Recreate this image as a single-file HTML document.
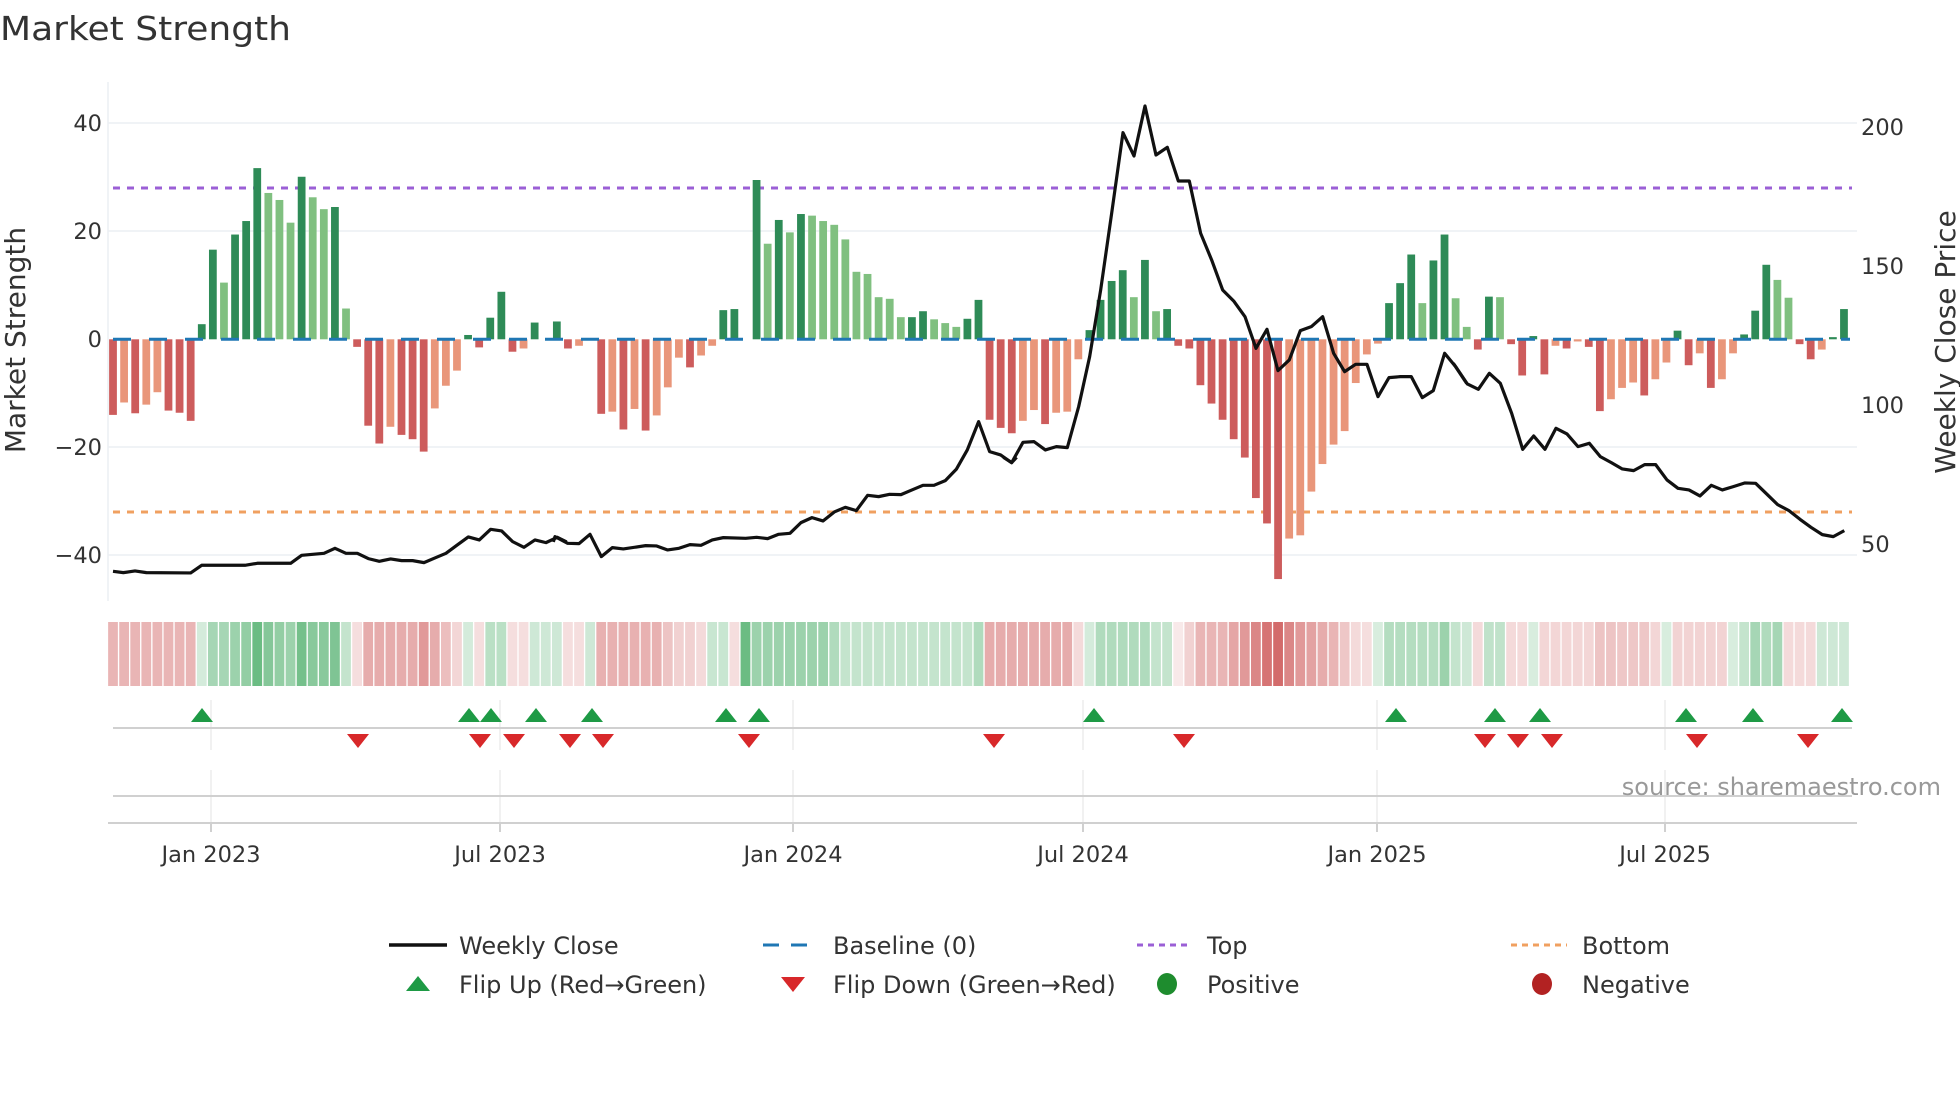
<!DOCTYPE html>
<html><head><meta charset="utf-8"><style>
html,body{margin:0;padding:0;background:#fff;}
svg{display:block;font-family:"DejaVu Sans","Liberation Sans",sans-serif;}
.a{fill:#2e8b57}.b{fill:#80c080}.c{fill:#cd5c5c}.d{fill:#e9967a}
.r{fill:#c84646}.g{fill:#3aa55a}
.t{fill:#333;font-size:22.5px}
.lg{fill:#333;font-size:24px}
</style></head><body>
<svg width="1960" height="1102" viewBox="0 0 1960 1102" xmlns="http://www.w3.org/2000/svg">
<text x="0" y="40" font-size="33" fill="#333" textLength="291" lengthAdjust="spacingAndGlyphs">Market Strength</text>

<g stroke="#eceff3" stroke-width="1.5">
<line x1="108" y1="123" x2="1857" y2="123"/><line x1="108" y1="231" x2="1857" y2="231"/>
<line x1="108" y1="447" x2="1857" y2="447"/><line x1="108" y1="555" x2="1857" y2="555"/>
<line x1="108" y1="82" x2="108" y2="601"/>
</g>
<g class="t" text-anchor="end">
<text x="102" y="131">40</text><text x="102" y="239">20</text><text x="102" y="347">0</text>
<text x="102" y="455">−20</text><text x="102" y="563">−40</text>
</g>
<g class="t">
<text x="1861" y="135">200</text><text x="1861" y="274">150</text><text x="1861" y="413">100</text><text x="1861" y="552">50</text>
</g>
<text transform="translate(25 340) rotate(-90)" text-anchor="middle" font-size="28" fill="#333">Market Strength</text>
<text transform="translate(1955 342) rotate(-90)" text-anchor="middle" font-size="28" fill="#333">Weekly Close Price</text>

<line x1="113" y1="188" x2="1852" y2="188" stroke="#9b5fd6" stroke-width="3" stroke-dasharray="7 7"/>
<line x1="113" y1="512" x2="1852" y2="512" stroke="#f0a060" stroke-width="3" stroke-dasharray="7 7"/>

<g transform="translate(113 339.3) scale(11.096 -5.4)">
<rect class="c" x="-.35" y="-14" width=".7" height="14"/>
<rect class="d" x=".65" y="-11.7" width=".7" height="11.7"/>
<rect class="c" x="1.65" y="-13.7" width=".7" height="13.7"/>
<rect class="d" x="2.65" y="-12.1" width=".7" height="12.1"/>
<rect class="d" x="3.65" y="-9.8" width=".7" height="9.8"/>
<rect class="c" x="4.65" y="-13.2" width=".7" height="13.2"/>
<rect class="c" x="5.65" y="-13.6" width=".7" height="13.6"/>
<rect class="c" x="6.65" y="-15.1" width=".7" height="15.1"/>
<rect class="a" x="7.65" y="0" width=".7" height="2.8"/>
<rect class="a" x="8.65" y="0" width=".7" height="16.6"/>
<rect class="b" x="9.65" y="0" width=".7" height="10.5"/>
<rect class="a" x="10.65" y="0" width=".7" height="19.4"/>
<rect class="a" x="11.65" y="0" width=".7" height="21.9"/>
<rect class="a" x="12.65" y="0" width=".7" height="31.7"/>
<rect class="b" x="13.65" y="0" width=".7" height="27.1"/>
<rect class="b" x="14.65" y="0" width=".7" height="25.8"/>
<rect class="b" x="15.65" y="0" width=".7" height="21.6"/>
<rect class="a" x="16.65" y="0" width=".7" height="30.1"/>
<rect class="b" x="17.65" y="0" width=".7" height="26.3"/>
<rect class="b" x="18.65" y="0" width=".7" height="24.1"/>
<rect class="a" x="19.65" y="0" width=".7" height="24.5"/>
<rect class="b" x="20.65" y="0" width=".7" height="5.7"/>
<rect class="c" x="21.65" y="-1.4" width=".7" height="1.4"/>
<rect class="c" x="22.65" y="-16" width=".7" height="16"/>
<rect class="c" x="23.65" y="-19.3" width=".7" height="19.3"/>
<rect class="d" x="24.65" y="-16.2" width=".7" height="16.2"/>
<rect class="c" x="25.65" y="-17.7" width=".7" height="17.7"/>
<rect class="c" x="26.65" y="-18.5" width=".7" height="18.5"/>
<rect class="c" x="27.65" y="-20.8" width=".7" height="20.8"/>
<rect class="d" x="28.65" y="-12.8" width=".7" height="12.8"/>
<rect class="d" x="29.65" y="-8.6" width=".7" height="8.6"/>
<rect class="d" x="30.65" y="-5.8" width=".7" height="5.8"/>
<rect class="a" x="31.65" y="0" width=".7" height=".8"/>
<rect class="c" x="32.65" y="-1.5" width=".7" height="1.5"/>
<rect class="a" x="33.65" y="0" width=".7" height="4"/>
<rect class="a" x="34.65" y="0" width=".7" height="8.8"/>
<rect class="c" x="35.65" y="-2.3" width=".7" height="2.3"/>
<rect class="d" x="36.65" y="-1.7" width=".7" height="1.7"/>
<rect class="a" x="37.65" y="0" width=".7" height="3.1"/>
<rect class="a" x="39.65" y="0" width=".7" height="3.3"/>
<rect class="c" x="40.65" y="-1.7" width=".7" height="1.7"/>
<rect class="d" x="41.65" y="-1.2" width=".7" height="1.2"/>
<rect class="c" x="43.65" y="-13.8" width=".7" height="13.8"/>
<rect class="d" x="44.65" y="-13.4" width=".7" height="13.4"/>
<rect class="c" x="45.65" y="-16.7" width=".7" height="16.7"/>
<rect class="d" x="46.65" y="-12.9" width=".7" height="12.9"/>
<rect class="c" x="47.65" y="-16.9" width=".7" height="16.9"/>
<rect class="d" x="48.65" y="-14.1" width=".7" height="14.1"/>
<rect class="d" x="49.65" y="-8.9" width=".7" height="8.9"/>
<rect class="d" x="50.65" y="-3.4" width=".7" height="3.4"/>
<rect class="c" x="51.65" y="-5.2" width=".7" height="5.2"/>
<rect class="d" x="52.65" y="-3" width=".7" height="3"/>
<rect class="d" x="53.65" y="-1.2" width=".7" height="1.2"/>
<rect class="a" x="54.65" y="0" width=".7" height="5.4"/>
<rect class="a" x="55.65" y="0" width=".7" height="5.6"/>
<rect class="a" x="57.65" y="0" width=".7" height="29.5"/>
<rect class="b" x="58.65" y="0" width=".7" height="17.7"/>
<rect class="a" x="59.65" y="0" width=".7" height="22.1"/>
<rect class="b" x="60.65" y="0" width=".7" height="19.8"/>
<rect class="a" x="61.65" y="0" width=".7" height="23.2"/>
<rect class="b" x="62.65" y="0" width=".7" height="22.9"/>
<rect class="b" x="63.65" y="0" width=".7" height="21.9"/>
<rect class="b" x="64.65" y="0" width=".7" height="21.2"/>
<rect class="b" x="65.65" y="0" width=".7" height="18.5"/>
<rect class="b" x="66.65" y="0" width=".7" height="12.5"/>
<rect class="b" x="67.65" y="0" width=".7" height="12.1"/>
<rect class="b" x="68.65" y="0" width=".7" height="7.8"/>
<rect class="b" x="69.65" y="0" width=".7" height="7.5"/>
<rect class="b" x="70.65" y="0" width=".7" height="4.1"/>
<rect class="a" x="71.65" y="0" width=".7" height="4.1"/>
<rect class="a" x="72.65" y="0" width=".7" height="5.2"/>
<rect class="b" x="73.65" y="0" width=".7" height="3.7"/>
<rect class="b" x="74.65" y="0" width=".7" height="3"/>
<rect class="b" x="75.65" y="0" width=".7" height="2.3"/>
<rect class="a" x="76.65" y="0" width=".7" height="3.8"/>
<rect class="a" x="77.65" y="0" width=".7" height="7.3"/>
<rect class="c" x="78.65" y="-14.9" width=".7" height="14.9"/>
<rect class="c" x="79.65" y="-16.4" width=".7" height="16.4"/>
<rect class="c" x="80.65" y="-17.4" width=".7" height="17.4"/>
<rect class="d" x="81.65" y="-15.1" width=".7" height="15.1"/>
<rect class="d" x="82.65" y="-13.1" width=".7" height="13.1"/>
<rect class="c" x="83.65" y="-15.7" width=".7" height="15.7"/>
<rect class="d" x="84.65" y="-13.6" width=".7" height="13.6"/>
<rect class="d" x="85.65" y="-13.4" width=".7" height="13.4"/>
<rect class="d" x="86.65" y="-3.7" width=".7" height="3.7"/>
<rect class="a" x="87.65" y="0" width=".7" height="1.7"/>
<rect class="a" x="88.65" y="0" width=".7" height="7.3"/>
<rect class="a" x="89.65" y="0" width=".7" height="10.8"/>
<rect class="a" x="90.65" y="0" width=".7" height="12.8"/>
<rect class="b" x="91.65" y="0" width=".7" height="7.8"/>
<rect class="a" x="92.65" y="0" width=".7" height="14.7"/>
<rect class="b" x="93.65" y="0" width=".7" height="5.2"/>
<rect class="a" x="94.65" y="0" width=".7" height="5.6"/>
<rect class="c" x="95.65" y="-1.2" width=".7" height="1.2"/>
<rect class="c" x="96.65" y="-1.7" width=".7" height="1.7"/>
<rect class="c" x="97.65" y="-8.5" width=".7" height="8.5"/>
<rect class="c" x="98.65" y="-11.9" width=".7" height="11.9"/>
<rect class="c" x="99.65" y="-14.9" width=".7" height="14.9"/>
<rect class="c" x="100.65" y="-18.5" width=".7" height="18.5"/>
<rect class="c" x="101.65" y="-21.9" width=".7" height="21.9"/>
<rect class="c" x="102.65" y="-29.4" width=".7" height="29.4"/>
<rect class="c" x="103.65" y="-34.1" width=".7" height="34.1"/>
<rect class="c" x="104.65" y="-44.4" width=".7" height="44.4"/>
<rect class="d" x="105.65" y="-36.9" width=".7" height="36.9"/>
<rect class="d" x="106.65" y="-36.3" width=".7" height="36.3"/>
<rect class="d" x="107.65" y="-28.2" width=".7" height="28.2"/>
<rect class="d" x="108.65" y="-23.1" width=".7" height="23.1"/>
<rect class="d" x="109.65" y="-19.5" width=".7" height="19.5"/>
<rect class="d" x="110.65" y="-17" width=".7" height="17"/>
<rect class="d" x="111.65" y="-8.1" width=".7" height="8.1"/>
<rect class="d" x="112.65" y="-2.8" width=".7" height="2.8"/>
<rect class="d" x="113.65" y="-.8" width=".7" height=".8"/>
<rect class="a" x="114.65" y="0" width=".7" height="6.7"/>
<rect class="a" x="115.65" y="0" width=".7" height="10.4"/>
<rect class="a" x="116.65" y="0" width=".7" height="15.7"/>
<rect class="b" x="117.65" y="0" width=".7" height="6.7"/>
<rect class="a" x="118.65" y="0" width=".7" height="14.6"/>
<rect class="a" x="119.65" y="0" width=".7" height="19.4"/>
<rect class="b" x="120.65" y="0" width=".7" height="7.6"/>
<rect class="b" x="121.65" y="0" width=".7" height="2.3"/>
<rect class="c" x="122.65" y="-1.9" width=".7" height="1.9"/>
<rect class="a" x="123.65" y="0" width=".7" height="7.9"/>
<rect class="b" x="124.65" y="0" width=".7" height="7.8"/>
<rect class="c" x="125.65" y="-.9" width=".7" height=".9"/>
<rect class="c" x="126.65" y="-6.7" width=".7" height="6.7"/>
<rect class="a" x="127.65" y="0" width=".7" height=".6"/>
<rect class="c" x="128.65" y="-6.5" width=".7" height="6.5"/>
<rect class="d" x="129.65" y="-1.2" width=".7" height="1.2"/>
<rect class="c" x="130.65" y="-1.7" width=".7" height="1.7"/>
<rect class="d" x="131.65" y="-.4" width=".7" height=".4"/>
<rect class="c" x="132.65" y="-1.4" width=".7" height="1.4"/>
<rect class="c" x="133.65" y="-13.3" width=".7" height="13.3"/>
<rect class="d" x="134.65" y="-11.1" width=".7" height="11.1"/>
<rect class="d" x="135.65" y="-9" width=".7" height="9"/>
<rect class="d" x="136.65" y="-8" width=".7" height="8"/>
<rect class="c" x="137.65" y="-10.4" width=".7" height="10.4"/>
<rect class="d" x="138.65" y="-7.4" width=".7" height="7.4"/>
<rect class="d" x="139.65" y="-4.3" width=".7" height="4.3"/>
<rect class="a" x="140.65" y="0" width=".7" height="1.6"/>
<rect class="c" x="141.65" y="-4.8" width=".7" height="4.8"/>
<rect class="d" x="142.65" y="-2.6" width=".7" height="2.6"/>
<rect class="c" x="143.65" y="-9" width=".7" height="9"/>
<rect class="d" x="144.65" y="-7.4" width=".7" height="7.4"/>
<rect class="d" x="145.65" y="-2.6" width=".7" height="2.6"/>
<rect class="a" x="146.65" y="0" width=".7" height=".9"/>
<rect class="a" x="147.65" y="0" width=".7" height="5.3"/>
<rect class="a" x="148.65" y="0" width=".7" height="13.8"/>
<rect class="b" x="149.65" y="0" width=".7" height="11"/>
<rect class="b" x="150.65" y="0" width=".7" height="7.7"/>
<rect class="c" x="151.65" y="-.9" width=".7" height=".9"/>
<rect class="c" x="152.65" y="-3.7" width=".7" height="3.7"/>
<rect class="d" x="153.65" y="-1.9" width=".7" height="1.9"/>
<rect class="a" x="154.65" y="0" width=".7" height=".4"/>
<rect class="a" x="155.65" y="0" width=".7" height="5.6"/>
</g>
<line x1="113" y1="339.3" x2="1850" y2="339.3" stroke="#1f77b4" stroke-width="3" stroke-dasharray="18 18"/>

<g fill="none" stroke="#111" stroke-width="3.2" stroke-linejoin="round">
<polyline vector-effect="non-scaling-stroke" transform="translate(105 100) scale(.3333)" points="24,1414 55,1418 90,1413 124,1418 257,1419 290,1396 420,1396 457,1390 557,1390 590,1366 657,1360 690,1345 723,1360 757,1360 790,1376 823,1384 857,1377 890,1382 923,1382 957,1388 990,1374 1023,1360 1057,1335 1090,1311 1123,1320 1157,1288 1190,1293 1223,1325 1257,1342 1290,1320 1323,1328 1357,1312 1385,1326"/>
<polyline vector-effect="non-scaling-stroke" transform="translate(555 100) scale(.3333)" points="-5,1326 0,1310 38,1330 72,1331 105,1303 139,1370 172,1343 205,1347 272,1337 305,1338 338,1350 372,1345 405,1334 438,1336 472,1320 505,1313 572,1315 605,1312 638,1316 671,1303 705,1300 738,1268 771,1253 804,1263 838,1236 871,1222 904,1232 938,1186 971,1190 1004,1183 1038,1184 1071,1170 1104,1156 1137,1156 1171,1142 1204,1108 1237,1050 1271,965 1304,1055 1337,1065 1370,1088 1385,1072"/>
<polyline vector-effect="non-scaling-stroke" transform="translate(1005 100) scale(.3333)" points="-5,1072 20,1088 54,1027 87,1025 121,1050 154,1040 187,1043 221,920 254,770 287,570 320,340 354,98 387,168 420,18 453,165 487,142 520,243 553,243 587,400 620,480 653,570 686,603 720,650 753,745 786,688 819,812 853,780 886,692 919,680 953,650 986,760 1019,815 1052,793 1086,793 1119,890 1152,833 1186,830 1219,830 1252,893 1285,872 1319,760 1352,800 1385,850"/>
<polyline vector-effect="non-scaling-stroke" transform="translate(1455 100) scale(.3333)" points="-5,790 37,852 70,868 103,820 136,850 170,940 203,1048 236,1008 270,1048 303,985 336,1002 369,1040 403,1030 436,1070 469,1088 502,1107 536,1112 569,1094 602,1094 636,1140 669,1165 702,1170 735,1188 769,1156 802,1170 835,1160 869,1149 902,1150 935,1182 968,1214 1002,1232 1035,1258 1068,1282 1102,1304 1135,1310 1168,1292"/>
</g>

<g transform="translate(113 622) scale(11.096 1)">
<g class="r" fill-opacity=".4"><rect x="-.44" width=".88" height="64"/><rect x=".56" width=".88" height="64"/><rect x="1.56" width=".88" height="64"/><rect x="2.56" width=".88" height="64"/><rect x="3.56" width=".88" height="64"/><rect x="4.56" width=".88" height="64"/><rect x="5.56" width=".88" height="64"/><rect x="6.56" width=".88" height="64"/></g>
<rect class="g" fill-opacity=".22" x="7.56" width=".88" height="64"/>
<rect class="g" fill-opacity=".45" x="8.56" width=".88" height="64"/>
<rect class="g" fill-opacity=".45" x="9.56" width=".88" height="64"/>
<rect class="g" fill-opacity=".5" x="10.56" width=".88" height="64"/>
<rect class="g" fill-opacity=".55" x="11.56" width=".88" height="64"/>
<rect class="g" fill-opacity=".75" x="12.56" width=".88" height="64"/>
<rect class="g" fill-opacity=".62" x="13.56" width=".88" height="64"/>
<rect class="g" fill-opacity=".55" x="14.56" width=".88" height="64"/>
<rect class="g" fill-opacity=".5" x="15.56" width=".88" height="64"/>
<rect class="g" fill-opacity=".7" x="16.56" width=".88" height="64"/>
<rect class="g" fill-opacity=".6" x="17.56" width=".88" height="64"/>
<rect class="g" fill-opacity=".6" x="18.56" width=".88" height="64"/>
<rect class="g" fill-opacity=".65" x="19.56" width=".88" height="64"/>
<rect class="g" fill-opacity=".3" x="20.56" width=".88" height="64"/>
<rect class="r" fill-opacity=".18" x="21.56" width=".88" height="64"/>
<g class="r" fill-opacity=".45"><rect x="22.56" width=".88" height="64"/><rect x="23.56" width=".88" height="64"/><rect x="24.56" width=".88" height="64"/><rect x="25.56" width=".88" height="64"/><rect x="26.56" width=".88" height="64"/><rect x="27.56" width=".88" height="64" fill-opacity=".55"/><rect x="28.56" width=".88" height="64"/><rect x="29.56" width=".88" height="64" fill-opacity=".35"/></g>
<rect class="r" fill-opacity=".22" x="30.56" width=".88" height="64"/>
<rect class="g" fill-opacity=".22" x="31.56" width=".88" height="64"/>
<rect class="r" fill-opacity=".18" x="32.56" width=".88" height="64"/>
<rect class="g" fill-opacity=".35" x="33.56" width=".88" height="64"/>
<rect class="g" fill-opacity=".35" x="34.56" width=".88" height="64"/>
<rect class="r" fill-opacity=".18" x="35.56" width=".88" height="64"/>
<rect class="r" fill-opacity=".18" x="36.56" width=".88" height="64"/>
<rect class="g" fill-opacity=".25" x="37.56" width=".88" height="64"/>
<rect class="g" fill-opacity=".25" x="38.56" width=".88" height="64"/>
<rect class="g" fill-opacity=".25" x="39.56" width=".88" height="64"/>
<rect class="r" fill-opacity=".18" x="40.56" width=".88" height="64"/>
<rect class="r" fill-opacity=".18" x="41.56" width=".88" height="64"/>
<rect class="g" fill-opacity=".25" x="42.56" width=".88" height="64"/>
<g class="r" fill-opacity=".42"><rect x="43.56" width=".88" height="64"/><rect x="44.56" width=".88" height="64"/><rect x="45.56" width=".88" height="64"/><rect x="46.56" width=".88" height="64"/><rect x="47.56" width=".88" height="64"/><rect x="48.56" width=".88" height="64"/><rect x="49.56" width=".88" height="64" fill-opacity=".32"/><rect x="50.56" width=".88" height="64" fill-opacity=".25"/><rect x="51.56" width=".88" height="64" fill-opacity=".25"/><rect x="52.56" width=".88" height="64" fill-opacity=".2"/></g>
<rect class="g" fill-opacity=".28" x="53.56" width=".88" height="64"/>
<rect class="g" fill-opacity=".28" x="54.56" width=".88" height="64"/>
<rect class="r" fill-opacity=".18" x="55.56" width=".88" height="64"/>
<rect class="g" fill-opacity=".75" x="56.56" width=".88" height="64"/>
<g class="g" fill-opacity=".5"><rect x="57.56" width=".88" height="64"/><rect x="58.56" width=".88" height="64"/><rect x="59.56" width=".88" height="64"/><rect x="60.56" width=".88" height="64"/><rect x="61.56" width=".88" height="64"/><rect x="62.56" width=".88" height="64"/><rect x="63.56" width=".88" height="64"/><rect x="64.56" width=".88" height="64" fill-opacity=".4"/></g>
<g class="g" fill-opacity=".3"><rect x="65.56" width=".88" height="64"/><rect x="66.56" width=".88" height="64"/><rect x="67.56" width=".88" height="64"/><rect x="68.56" width=".88" height="64"/><rect x="69.56" width=".88" height="64"/><rect x="70.56" width=".88" height="64"/><rect x="71.56" width=".88" height="64"/><rect x="72.56" width=".88" height="64"/><rect x="73.56" width=".88" height="64"/><rect x="74.56" width=".88" height="64"/><rect x="75.56" width=".88" height="64"/><rect x="76.56" width=".88" height="64"/><rect x="77.56" width=".88" height="64" fill-opacity=".4"/></g>
<g class="r" fill-opacity=".45"><rect x="78.56" width=".88" height="64"/><rect x="79.56" width=".88" height="64"/><rect x="80.56" width=".88" height="64"/><rect x="81.56" width=".88" height="64"/><rect x="82.56" width=".88" height="64"/><rect x="83.56" width=".88" height="64"/><rect x="84.56" width=".88" height="64"/><rect x="85.56" width=".88" height="64"/></g>
<rect class="r" fill-opacity=".2" x="86.56" width=".88" height="64"/>
<rect class="g" fill-opacity=".22" x="87.56" width=".88" height="64"/>
<g class="g" fill-opacity=".4"><rect x="88.56" width=".88" height="64"/><rect x="89.56" width=".88" height="64"/><rect x="90.56" width=".88" height="64"/><rect x="91.56" width=".88" height="64"/><rect x="92.56" width=".88" height="64"/><rect x="93.56" width=".88" height="64" fill-opacity=".3"/><rect x="94.56" width=".88" height="64" fill-opacity=".3"/></g>
<rect class="r" fill-opacity=".12" x="95.56" width=".88" height="64"/>
<rect class="r" fill-opacity=".25" x="96.56" width=".88" height="64"/>
<g class="r" fill-opacity=".4"><rect x="97.56" width=".88" height="64"/><rect x="98.56" width=".88" height="64"/><rect x="99.56" width=".88" height="64"/><rect x="100.56" width=".88" height="64" fill-opacity=".48"/><rect x="101.56" width=".88" height="64" fill-opacity=".55"/><rect x="102.56" width=".88" height="64" fill-opacity=".65"/><rect x="103.56" width=".88" height="64" fill-opacity=".75"/><rect x="104.56" width=".88" height="64" fill-opacity=".8"/><rect x="105.56" width=".88" height="64" fill-opacity=".65"/><rect x="106.56" width=".88" height="64" fill-opacity=".55"/><rect x="107.56" width=".88" height="64" fill-opacity=".5"/><rect x="108.56" width=".88" height="64" fill-opacity=".45"/><rect x="109.56" width=".88" height="64"/><rect x="110.56" width=".88" height="64" fill-opacity=".3"/><rect x="111.56" width=".88" height="64" fill-opacity=".2"/><rect x="112.56" width=".88" height="64" fill-opacity=".18"/></g>
<rect class="g" fill-opacity=".2" x="113.56" width=".88" height="64"/>
<g class="g" fill-opacity=".38"><rect x="114.56" width=".88" height="64"/><rect x="115.56" width=".88" height="64"/><rect x="116.56" width=".88" height="64"/><rect x="117.56" width=".88" height="64"/><rect x="118.56" width=".88" height="64"/><rect x="119.56" width=".88" height="64" fill-opacity=".5"/><rect x="120.56" width=".88" height="64" fill-opacity=".3"/><rect x="121.56" width=".88" height="64" fill-opacity=".25"/></g>
<rect class="r" fill-opacity=".2" x="122.56" width=".88" height="64"/>
<rect class="g" fill-opacity=".32" x="123.56" width=".88" height="64"/>
<rect class="g" fill-opacity=".32" x="124.56" width=".88" height="64"/>
<rect class="r" fill-opacity=".2" x="125.56" width=".88" height="64"/>
<rect class="r" fill-opacity=".2" x="126.56" width=".88" height="64"/>
<rect class="g" fill-opacity=".2" x="127.56" width=".88" height="64"/>
<g class="r" fill-opacity=".22"><rect x="128.56" width=".88" height="64"/><rect x="129.56" width=".88" height="64"/><rect x="130.56" width=".88" height="64"/><rect x="131.56" width=".88" height="64"/><rect x="132.56" width=".88" height="64"/><rect x="133.56" width=".88" height="64" fill-opacity=".32"/><rect x="134.56" width=".88" height="64" fill-opacity=".32"/><rect x="135.56" width=".88" height="64" fill-opacity=".3"/><rect x="136.56" width=".88" height="64" fill-opacity=".3"/><rect x="137.56" width=".88" height="64" fill-opacity=".3"/><rect x="138.56" width=".88" height="64"/></g>
<rect class="g" fill-opacity=".2" x="139.56" width=".88" height="64"/>
<g class="r" fill-opacity=".24"><rect x="140.56" width=".88" height="64"/><rect x="141.56" width=".88" height="64"/><rect x="142.56" width=".88" height="64"/><rect x="143.56" width=".88" height="64"/><rect x="144.56" width=".88" height="64"/></g>
<rect class="g" fill-opacity=".2" x="145.56" width=".88" height="64"/>
<rect class="g" fill-opacity=".3" x="146.56" width=".88" height="64"/>
<rect class="g" fill-opacity=".45" x="147.56" width=".88" height="64"/>
<rect class="g" fill-opacity=".4" x="148.56" width=".88" height="64"/>
<rect class="g" fill-opacity=".45" x="149.56" width=".88" height="64"/>
<rect class="r" fill-opacity=".2" x="150.56" width=".88" height="64"/>
<rect class="r" fill-opacity=".2" x="151.56" width=".88" height="64"/>
<rect class="r" fill-opacity=".2" x="152.56" width=".88" height="64"/>
<rect class="g" fill-opacity=".25" x="153.56" width=".88" height="64"/>
<rect class="g" fill-opacity=".25" x="154.56" width=".88" height="64"/>
<rect class="g" fill-opacity=".25" x="155.56" width=".88" height="64"/>
</g>

<g stroke="#ececec" stroke-width="1.5">
<line x1="211" y1="700" x2="211" y2="750"/><line x1="500" y1="700" x2="500" y2="750"/><line x1="793" y1="700" x2="793" y2="750"/><line x1="1083" y1="700" x2="1083" y2="750"/><line x1="1377" y1="700" x2="1377" y2="750"/><line x1="1665" y1="700" x2="1665" y2="750"/>
<line x1="211" y1="770" x2="211" y2="823"/><line x1="500" y1="770" x2="500" y2="823"/><line x1="793" y1="770" x2="793" y2="823"/><line x1="1083" y1="770" x2="1083" y2="823"/><line x1="1377" y1="770" x2="1377" y2="823"/><line x1="1665" y1="770" x2="1665" y2="823"/>
</g>
<g stroke="#d0d0d0" stroke-width="2">
<line x1="113" y1="728" x2="1852" y2="728"/>
<line x1="113" y1="796" x2="1852" y2="796"/>
<line x1="108" y1="823" x2="1857" y2="823"/>
<line x1="211" y1="823" x2="211" y2="832"/><line x1="500" y1="823" x2="500" y2="832"/><line x1="793" y1="823" x2="793" y2="832"/><line x1="1083" y1="823" x2="1083" y2="832"/><line x1="1377" y1="823" x2="1377" y2="832"/><line x1="1665" y1="823" x2="1665" y2="832"/>
</g>
<g fill="#1e9a45">
<polygon points="191,722 202,708 213,722"/><polygon points="458,722 469,708 480,722"/><polygon points="480,722 491,708 502,722"/><polygon points="525,722 536,708 547,722"/><polygon points="581,722 592,708 603,722"/><polygon points="715,722 726,708 737,722"/><polygon points="748,722 759,708 770,722"/><polygon points="1083,722 1094,708 1105,722"/><polygon points="1385,722 1396,708 1407,722"/><polygon points="1484,722 1495,708 1506,722"/><polygon points="1529,722 1540,708 1551,722"/><polygon points="1675,722 1686,708 1697,722"/><polygon points="1742,722 1753,708 1764,722"/><polygon points="1831,722 1842,708 1853,722"/>
</g>
<g fill="#d8282a">
<polygon points="347,734 369,734 358,748"/><polygon points="469,734 491,734 480,748"/><polygon points="503,734 525,734 514,748"/><polygon points="559,734 581,734 570,748"/><polygon points="592,734 614,734 603,748"/><polygon points="738,734 760,734 749,748"/><polygon points="983,734 1005,734 994,748"/><polygon points="1173,734 1195,734 1184,748"/><polygon points="1474,734 1496,734 1485,748"/><polygon points="1507,734 1529,734 1518,748"/><polygon points="1541,734 1563,734 1552,748"/><polygon points="1686,734 1708,734 1697,748"/><polygon points="1797,734 1819,734 1808,748"/>
</g>
<text x="1941" y="795" text-anchor="end" font-size="24" fill="#999">source: sharemaestro.com</text>

<g class="t" text-anchor="middle">
<text x="211" y="862">Jan 2023</text><text x="500" y="862">Jul 2023</text><text x="793" y="862">Jan 2024</text><text x="1083" y="862">Jul 2024</text><text x="1377" y="862">Jan 2025</text><text x="1665" y="862">Jul 2025</text>
</g>

<line x1="389" y1="945" x2="447" y2="945" stroke="#111" stroke-width="3.5"/>
<text class="lg" x="459" y="954">Weekly Close</text>
<line x1="763" y1="945" x2="817" y2="945" stroke="#1f77b4" stroke-width="3" stroke-dasharray="16 12"/>
<text class="lg" x="833" y="954">Baseline (0)</text>
<line x1="1137" y1="945" x2="1191" y2="945" stroke="#9b5fd6" stroke-width="3" stroke-dasharray="6 5"/>
<text class="lg" x="1207" y="954">Top</text>
<line x1="1511" y1="945" x2="1567" y2="945" stroke="#f0a060" stroke-width="3" stroke-dasharray="6 5"/>
<text class="lg" x="1582" y="954">Bottom</text>
<polygon points="406,991 418,976 430,991" fill="#1e9a45"/>
<text class="lg" x="459" y="993">Flip Up (Red→Green)</text>
<polygon points="781,977 805,977 793,992" fill="#d8282a"/>
<text class="lg" x="833" y="993">Flip Down (Green→Red)</text>
<ellipse cx="1167" cy="984" rx="10" ry="11" fill="#1e8c2e"/>
<text class="lg" x="1207" y="993">Positive</text>
<ellipse cx="1542" cy="984" rx="10" ry="11" fill="#b22222"/>
<text class="lg" x="1582" y="993">Negative</text>
</svg>
</body></html>
